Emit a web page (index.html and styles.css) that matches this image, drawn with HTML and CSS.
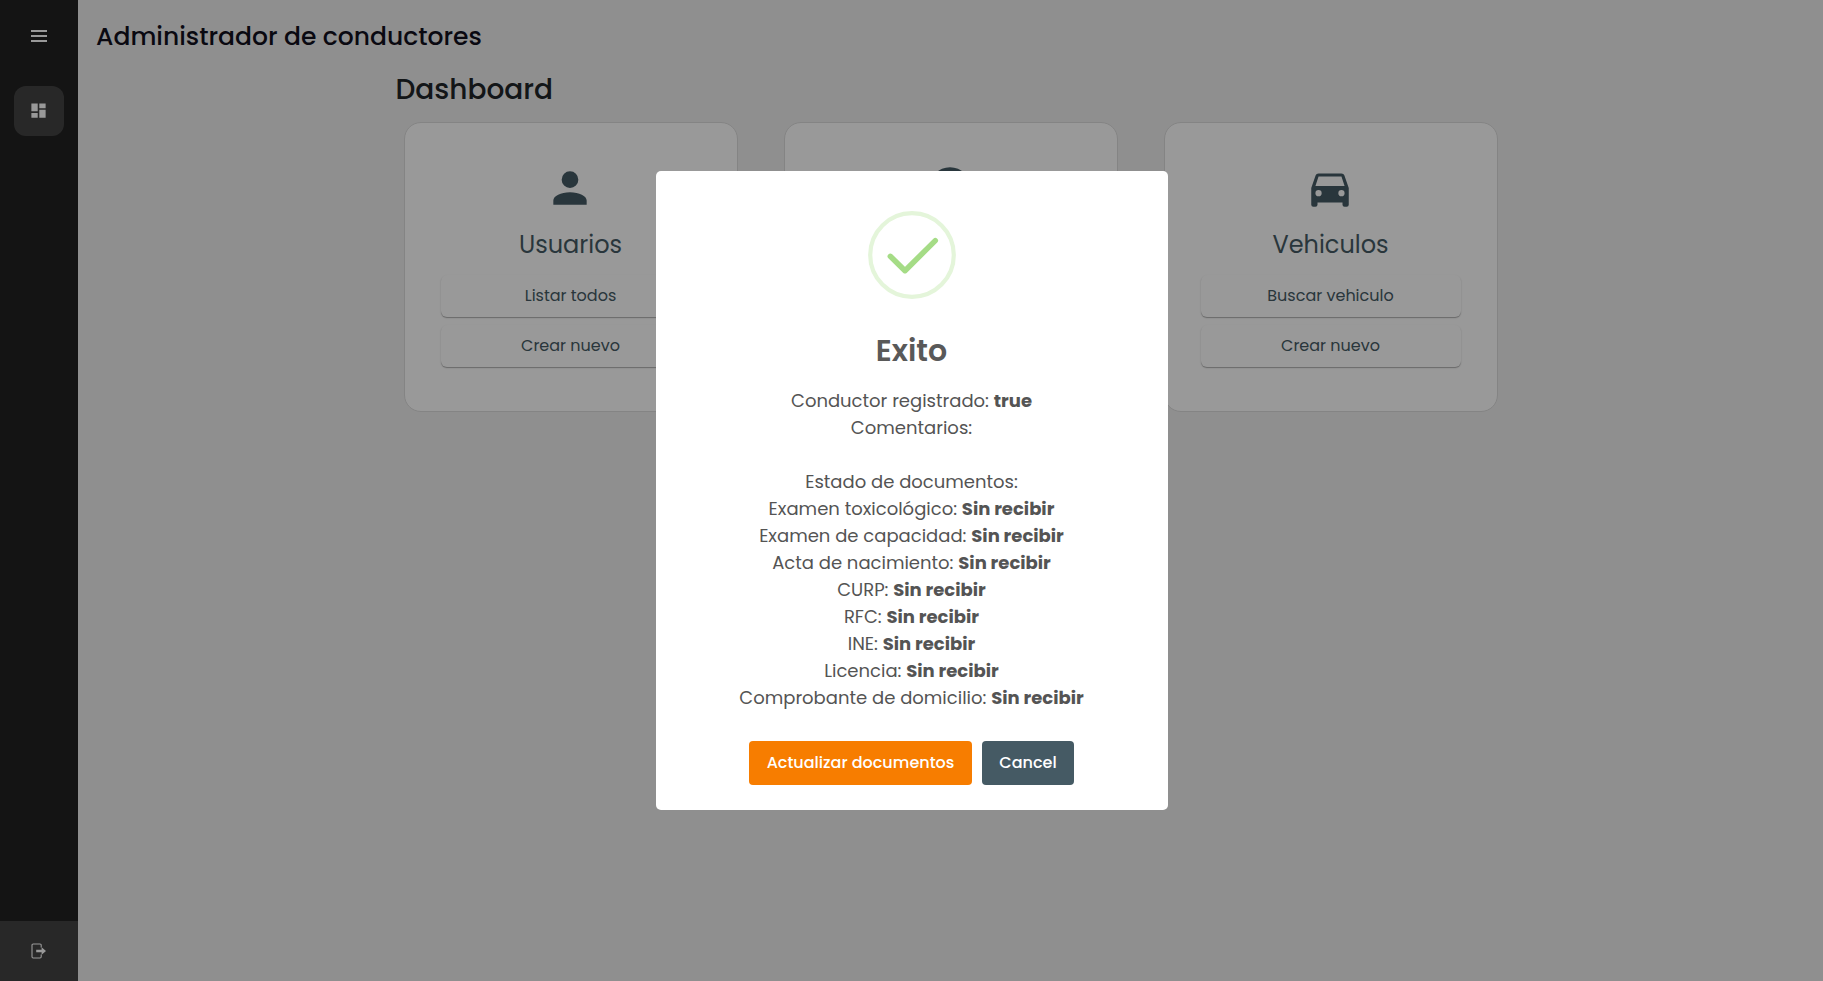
FILE: index.html
```html
<!DOCTYPE html>
<html lang="es">
<head>
<meta charset="utf-8">
<title>Administrador de conductores</title>
<link rel="stylesheet" href="styles.css">
</head>
<body>
<div class="app">
  <nav class="sidebar">
    <svg class="menu-icon" viewBox="0 0 24 24"><path d="M4 6h16v2H4zm0 5h16v2H4zm0 5h16v2H4z"/></svg>
    <a class="nav-item"><svg class="nav-icon" viewBox="0 0 24 24"><path d="M13,3V9H21V3M13,21H21V11H13M3,21H11V15H3M3,13H11V3H3V13Z"/></svg></a>
    <a class="logout"><svg class="logout-icon" viewBox="0 0 16 16"><path class="door" d="M10.2 4.4V2.2Q10.2 1 9 1H2.2Q1 1 1 2.2V13.8Q1 15 2.2 15H9Q10.2 15 10.2 13.8V11.6"/><path d="M5.2 6.7H10.6V4.3L15 8L10.6 11.7V9.3H5.2z"/></svg></a>
  </nav>
  <div class="page">
    <header class="topbar">Administrador de conductores</header>
    <main class="content">
      <h1 class="heading">Dashboard</h1>
      <div class="cards">
        <section class="card">
          <svg class="card-icon" viewBox="0 0 24 24"><path d="M12,4A4,4 0 0,1 16,8A4,4 0 0,1 12,12A4,4 0 0,1 8,8A4,4 0 0,1 12,4M12,14C16.42,14 20,15.79 20,18V20H4V18C4,15.79 7.58,14 12,14Z"/></svg>
          <h2 class="card-title">Usuarios</h2>
          <button class="card-btn">Listar todos</button>
          <button class="card-btn">Crear nuevo</button>
        </section>
        <section class="card">
          <svg class="card-icon" viewBox="0 0 24 24"><path fill-rule="evenodd" d="M12,2A10,10 0 1,0 12,22A10,10 0 1,0 12,2M12,4A8,8 0 1,1 12,20A8,8 0 1,1 12,4Z"/></svg>
        </section>
        <section class="card">
          <svg class="card-icon" viewBox="0 0 24 24"><path d="M5,11L6.5,6.5H17.5L19,11M17.5,16A1.5,1.5 0 0,1 16,14.5A1.5,1.5 0 0,1 17.5,13A1.5,1.5 0 0,1 19,14.5A1.5,1.5 0 0,1 17.5,16M6.5,16A1.5,1.5 0 0,1 5,14.5A1.5,1.5 0 0,1 6.5,13A1.5,1.5 0 0,1 8,14.5A1.5,1.5 0 0,1 6.5,16M18.92,6C18.72,5.42 18.16,5 17.5,5H6.5C5.84,5 5.28,5.42 5.08,6L3,12V20A1,1 0 0,0 4,21H5A1,1 0 0,0 6,20V19H18V20A1,1 0 0,0 19,21H20A1,1 0 0,0 21,20V12L18.92,6Z"/></svg>
          <h2 class="card-title">Vehiculos</h2>
          <button class="card-btn">Buscar vehiculo</button>
          <button class="card-btn">Crear nuevo</button>
        </section>
      </div>
    </main>
  </div>
</div>
<div class="overlay">
  <div class="modal" role="dialog">
    <svg class="success" viewBox="0 0 88 88"><circle cx="44" cy="44" r="41.8"/><path d="M22.3 45.3L37 59.7L67.3 29.6"/></svg>
    <h2 class="modal-title">Exito</h2>
    <div class="modal-body">
      <p>Conductor registrado: <b>true</b></p>
      <p>Comentarios:</p>
      <p>&nbsp;</p>
      <p>Estado de documentos:</p>
      <p>Examen toxicológico: <b>Sin recibir</b></p>
      <p>Examen de capacidad: <b>Sin recibir</b></p>
      <p>Acta de nacimiento: <b>Sin recibir</b></p>
      <p>CURP: <b>Sin recibir</b></p>
      <p>RFC: <b>Sin recibir</b></p>
      <p>INE: <b>Sin recibir</b></p>
      <p>Licencia: <b>Sin recibir</b></p>
      <p>Comprobante de domicilio: <b>Sin recibir</b></p>
    </div>
    <div class="actions">
      <button class="btn confirm">Actualizar documentos</button>
      <button class="btn cancel">Cancel</button>
    </div>
  </div>
</div>
</body>
</html>
```
FILE: styles.css
```css
* { box-sizing: border-box; margin: 0; padding: 0; }
body { font-family: Poppins, Inter, sans-serif; overflow: hidden; }
button { font-family: inherit; border: 0; }
.app { display: flex; height: 100vh; background: #efefef; }
.sidebar { width: 78px; background: #222; display: flex; flex-direction: column; align-items: center; padding-top: 24px; fill: #fff; }
.menu-icon { width: 24px; height: 24px; }
.nav-item { width: 50px; height: 50px; margin-top: 38px; border-radius: 12px; background: #444; display: flex; align-items: center; justify-content: center; }
.nav-icon { width: 19px; height: 19px; margin: 0 1px 1px 0; }
.logout { width: 78px; height: 60px; margin-top: auto; background: #444; display: flex; align-items: center; justify-content: center; }
.logout-icon { width: 16px; height: 16px; }
.door { fill: none; stroke: #fff; stroke-width: 1.1; }
.page { flex: 1; }
.topbar { height: 72px; padding-left: 18px; line-height: 73px; font-size: 25px; font-weight: 500; color: #11101d; white-space: nowrap; }
.content { width: 1110px; margin-left: 317.5px; }
.heading { height: 50px; line-height: 35px; font-size: 28px; font-weight: 500; color: #212529; }
.cards { display: flex; gap: 46px; padding-left: 8.5px; }
.card { width: 334px; height: 290px; background: #fff; border: 1px solid #dcdcdc; border-radius: 17px; display: flex; flex-direction: column; align-items: center; padding: 40px 36px 0; }
.card-icon { width: 50px; height: 50px; margin-right: 2px; fill: #455a64; }
.card-title { height: 62px; padding-right: 1px; line-height: 64px; font-size: 24px; font-weight: 400; color: #455a64; }
.card-btn { width: 260px; height: 42px; margin-bottom: 8px; padding: 0 1px 2px 0; border-radius: 6px; background: #fff; color: #455a64; font-size: 16px; box-shadow: 0 1px 1px rgba(0,0,0,.25), 0 1px 2px rgba(0,0,0,.1); }
.overlay { position: fixed; inset: 0; background: rgba(0,0,0,.4); display: flex; align-items: center; justify-content: center; }
.modal { width: 512px; height: 639px; background: #fff; border-radius: 5px; display: flex; flex-direction: column; align-items: center; padding-top: 40px; color: #545454; }
.success { width: 88px; height: 88px; fill: none; stroke-linecap: round; stroke-linejoin: round; }
.success circle { stroke: #e4f5da; stroke-width: 4.2; }
.success path { stroke: #a5dc86; stroke-width: 5.5; }
.modal-title { margin-top: 28px; line-height: 48px; font-size: 30px; font-weight: 600; color: #595959; }
.modal-body { margin-top: 12px; font-size: 18px; line-height: 27px; text-align: center; white-space: nowrap; }
.modal-body b { font-weight: 700; }
.actions { display: flex; gap: 10px; margin-top: 30px; }
.btn { height: 44px; padding-bottom: 2px; border-radius: 4px; color: #fff; font-size: 16px; font-weight: 500; }
.confirm { width: 223px; background: #f77d00; }
.cancel { width: 92px; background: #455a64; }
```
